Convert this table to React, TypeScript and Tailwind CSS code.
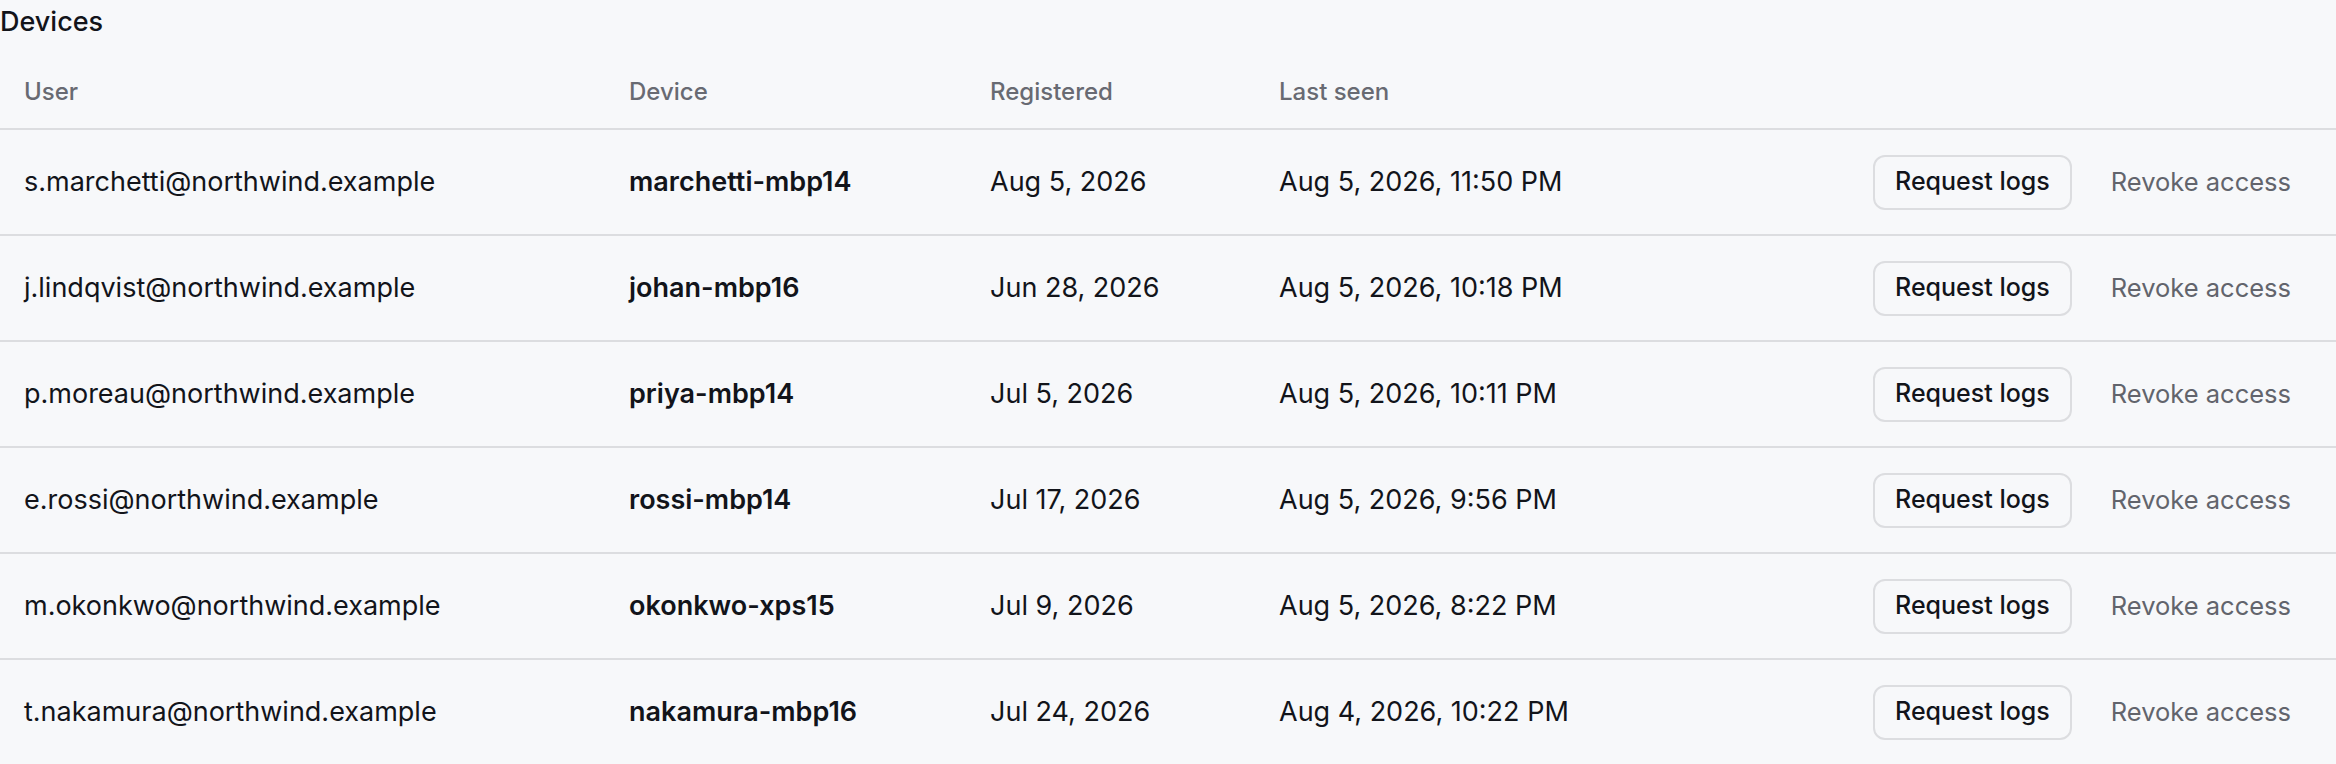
type Device = {
  user: string;
  device: string;
  registered: string;
  lastSeen: string;
};

const devices: Device[] = [
  { user: 's.marchetti@northwind.example', device: 'marchetti-mbp14', registered: 'Aug 5, 2026', lastSeen: 'Aug 5, 2026, 11:50 PM' },
  { user: 'j.lindqvist@northwind.example', device: 'johan-mbp16', registered: 'Jun 28, 2026', lastSeen: 'Aug 5, 2026, 10:18 PM' },
  { user: 'p.moreau@northwind.example', device: 'priya-mbp14', registered: 'Jul 5, 2026', lastSeen: 'Aug 5, 2026, 10:11 PM' },
  { user: 'e.rossi@northwind.example', device: 'rossi-mbp14', registered: 'Jul 17, 2026', lastSeen: 'Aug 5, 2026, 9:56 PM' },
  { user: 'm.okonkwo@northwind.example', device: 'okonkwo-xps15', registered: 'Jul 9, 2026', lastSeen: 'Aug 5, 2026, 8:22 PM' },
  { user: 't.nakamura@northwind.example', device: 'nakamura-mbp16', registered: 'Jul 24, 2026', lastSeen: 'Aug 4, 2026, 10:22 PM' },
];

export default function App() {
  return (
    <div className="min-h-screen w-full bg-[#f7f8fa] font-['Inter',sans-serif] text-[#12141a]">
      <h2 className="text-[27px] leading-[44px] font-medium">Devices</h2>

      <div className="mt-[9px] grid h-[77px] grid-cols-[605px_361px_289px_1fr_auto] items-center border-b-2 border-[#dcdde0] pt-[3px] text-[24px] font-medium text-[#686a72]">
        <div className="px-6">User</div>
        <div className="px-6">Device</div>
        <div className="px-6">Registered</div>
        <div className="px-6">Last seen</div>
        <div />
      </div>

      {devices.map((d) => (
        <div
          key={d.device}
          className="grid h-[106px] grid-cols-[605px_361px_289px_1fr_auto] items-center border-b-2 border-[#dcdde0] text-[27px]"
        >
          <div className="px-6">{d.user}</div>
          <div className="px-6 font-semibold">{d.device}</div>
          <div className="px-6">{d.registered}</div>
          <div className="px-6">{d.lastSeen}</div>
          <div className="flex items-center justify-end gap-[18px] pr-6">
            <button className="h-[55px] rounded-[12px] border-2 border-[#dcdde0] px-[20px] text-[25px] font-medium text-[#12141a]">
              Request logs
            </button>
            <button className="px-[21px] text-[25.5px] text-[#62646c]">Revoke access</button>
          </div>
        </div>
      ))}
    </div>
  );
}
